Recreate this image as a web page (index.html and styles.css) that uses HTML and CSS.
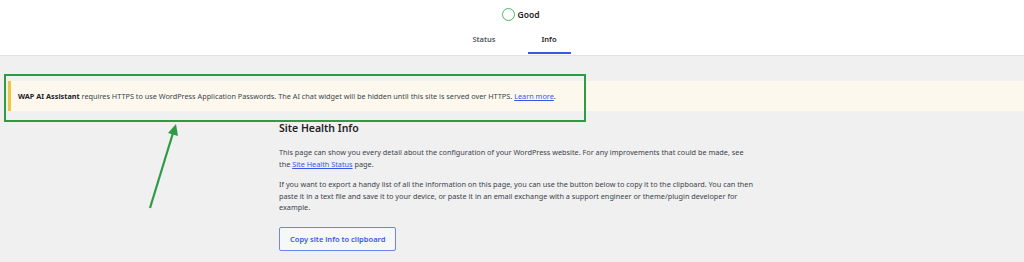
FILE: index.html
```html
<!DOCTYPE html>
<html>
<head>
  <title>Site Health Info</title>
  <link rel="stylesheet" href="styles.css">
</head>
<body>
<div class="health-header">
  <div class="health-title">
    <span class="health-ring"></span>
    <span>Good</span>
  </div>
  <nav class="health-tabs">
    <a class="tab">Status</a>
    <a class="tab active">Info</a>
  </nav>
</div>

<div class="notice">
  <p><strong>WAP AI Assistant</strong> requires HTTPS to use WordPress Application Passwords. The AI chat widget will be hidden until this site is served over HTTPS. <a href="#">Learn more</a>.</p>
</div>

<div class="health-body">
  <h2>Site Health Info</h2>
  <p>This page can show you every detail about the configuration of your WordPress website. For any improvements that could be made, see the <a href="#">Site Health Status</a> page.</p>
  <p>If you want to export a handy list of all the information on this page, you can use the button below to copy it to the clipboard. You can then paste it in a text file and save it to your device, or paste it in an email exchange with a support engineer or theme/plugin developer for example.</p>
  <button class="copy-button">Copy site info to clipboard</button>
</div>

<!-- annotation overlay -->
<div class="mark-box"></div>
<svg class="mark-arrow" width="40" height="90" viewBox="0 0 40 90">
  <line x1="7" y1="85" x2="30" y2="10" stroke="#2f9a45" stroke-width="2.2"/>
  <polygon points="33,1 35,13 25,10" fill="#2f9a45"/>
</svg>
</body>
</html>
```

FILE: styles.css
```css
body { margin: 0; background: #f0f0f1; font-family: "Noto Sans", "Liberation Sans", sans-serif; color: #3c434a; font-size: 7.3px; }
a { color: #3858e9; }

.health-header { background: #fff; height: 56px; border-bottom: 1px solid #e2e2e2; box-sizing: border-box; display: flex; flex-direction: column; align-items: center; }
.health-title { display: flex; align-items: center; gap: 3px; margin-top: 8px; margin-left: 17px; font-size: 8.5px; font-weight: 600; color: #1d2327; }
.health-ring { width: 11px; height: 11px; border: 1.5px solid #4ab866; border-radius: 50%; }
.health-tabs { display: flex; margin-top: 11px; margin-left: 5px; }
.tab { font-size: 7.5px; font-weight: 600; color: #50575e; padding: 2px 14px 8px; text-decoration: none; border-bottom: 2px solid transparent; }
.tab + .tab { margin-left: 18px; }
.tab.active { color: #1d2327; border-bottom-color: #3858e9; }

.notice { margin: 25px 0 0 8px; background: #fdf8ee; border-left: 3px solid #f0c33c; height: 30px; display: flex; align-items: center; padding-left: 7px; }
.notice p { margin: 0; }
.notice strong { color: #1d2327; }

.health-body { width: 475px; margin: 0 auto; padding-left: 9px; }
.health-body h2 { font-size: 10.5px; font-weight: 600; color: #1d2327; margin: 10px 0 12px; }
.health-body p { line-height: 11.5px; margin: 0 0 9px; }
.copy-button { margin-top: 4px; font-family: inherit; font-size: 7.5px; font-weight: 600; color: #3858e9; background: #f6f7f7; border: 1px solid #6f84ee; border-radius: 2px; padding: 6px 10px; }

.mark-box { position: absolute; left: 4px; top: 74px; width: 578px; height: 44px; border: 2px solid #2f9a45; }
.mark-arrow { position: absolute; left: 143px; top: 123px; }
```
